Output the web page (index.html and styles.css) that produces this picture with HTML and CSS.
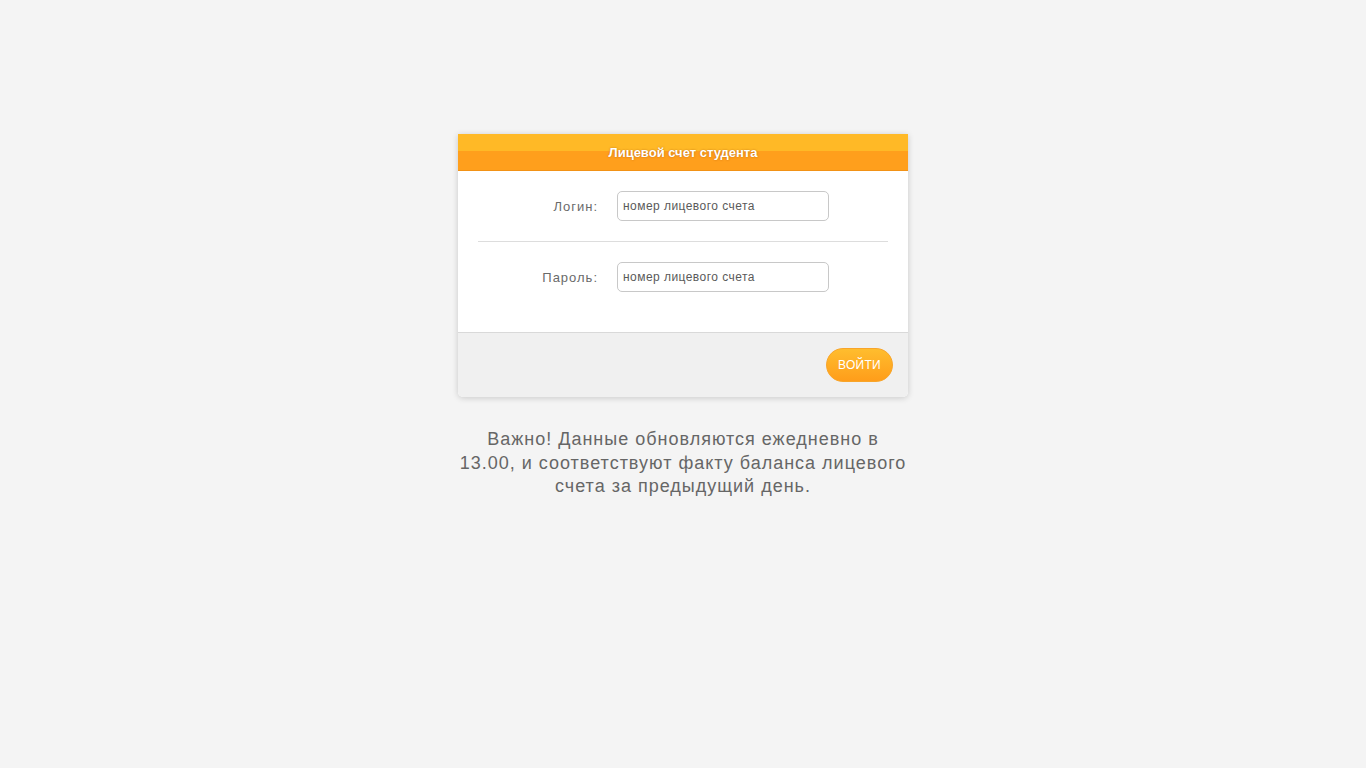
FILE: index.html
```html
<!DOCTYPE html>
<html lang="ru">
<head>
  <meta charset="UTF-8">
  <title>Лицевой счет студента</title>
  <link rel="stylesheet" href="styles.css">
</head>
<body>
  <div class="wrap">
    <form class="login-box" onsubmit="return false;">
      <div class="login-head">Лицевой счет студента</div>
      <div class="login-body">
        <div class="row">
          <label for="login">Логин:</label>
          <input type="text" id="login" name="login" placeholder="номер лицевого счета">
        </div>
        <hr>
        <div class="row">
          <label for="password">Пароль:</label>
          <input type="password" id="password" name="password" placeholder="номер лицевого счета">
        </div>
      </div>
      <div class="login-foot">
        <button type="submit">ВОЙТИ</button>
      </div>
    </form>

    <p class="note">
      Важно! Данные обновляются ежедневно в 13.00, и соответствуют факту баланса лицевого счета за предыдущий день.
    </p>
  </div>
</body>
</html>
```

FILE: styles.css
```css
body {
  font-family: "Liberation Sans", Arial, sans-serif;
  background-color: #f4f4f4;
  margin: 0;
  padding: 0;
}
.wrap {
  width: 450px;
  margin: 134px auto 0;
}
.login-box {
  background-color: #ffffff;
  border-radius: 0 0 5px 5px;
  box-shadow: 0 1px 6px rgba(0, 0, 0, 0.18);
}
.login-head {
  height: 36px;
  line-height: 37px;
  text-align: center;
  font-size: 13px;
  font-weight: bold;
  color: #ffffff;
  text-shadow: 0 0 2px rgba(150, 70, 0, 0.6);
  background: linear-gradient(to bottom, #ffb926 0, #ffb926 17px, #ff9f1c 17px, #ff9f1c 100%);
  border-bottom: 1px solid #f29216;
}
.login-body {
  padding: 20px 20px 40px;
}
.row {
  display: flex;
  align-items: center;
  height: 30px;
}
.row label {
  width: 120px;
  text-align: right;
  padding-right: 19px;
  font-size: 13px;
  letter-spacing: 1px;
  color: #6a6a6a;
}
.row input {
  width: 212px;
  height: 30px;
  box-sizing: border-box;
  border: 1px solid #c8c8c8;
  border-radius: 5px;
  padding: 0 5px;
  font-family: inherit;
  font-size: 12px;
  letter-spacing: 0.45px;
  color: #444444;
}
.row input::placeholder {
  color: #5a5a5a;
}
hr {
  border: 0;
  height: 1px;
  background-color: #dddddd;
  margin: 20px 0;
}
.login-foot {
  background-color: #f0f0f0;
  border-top: 1px solid #d9d9d9;
  border-radius: 0 0 5px 5px;
  height: 64px;
  display: flex;
  align-items: center;
  justify-content: flex-end;
  padding: 0 15px;
}
.login-foot button {
  height: 34px;
  width: 67px;
  padding: 0;
  border: 1px solid #f8a52a;
  border-radius: 17px;
  background: linear-gradient(to bottom, #ffbd2e, #ff9d1a);
  color: #ffffff;
  font-family: inherit;
  font-size: 12px;
  letter-spacing: 0.3px;
  cursor: pointer;
}
.note {
  margin: 31px 0 0;
  text-align: center;
  font-size: 18px;
  letter-spacing: 1px;
  line-height: 23.5px;
  color: #666666;
}
```
